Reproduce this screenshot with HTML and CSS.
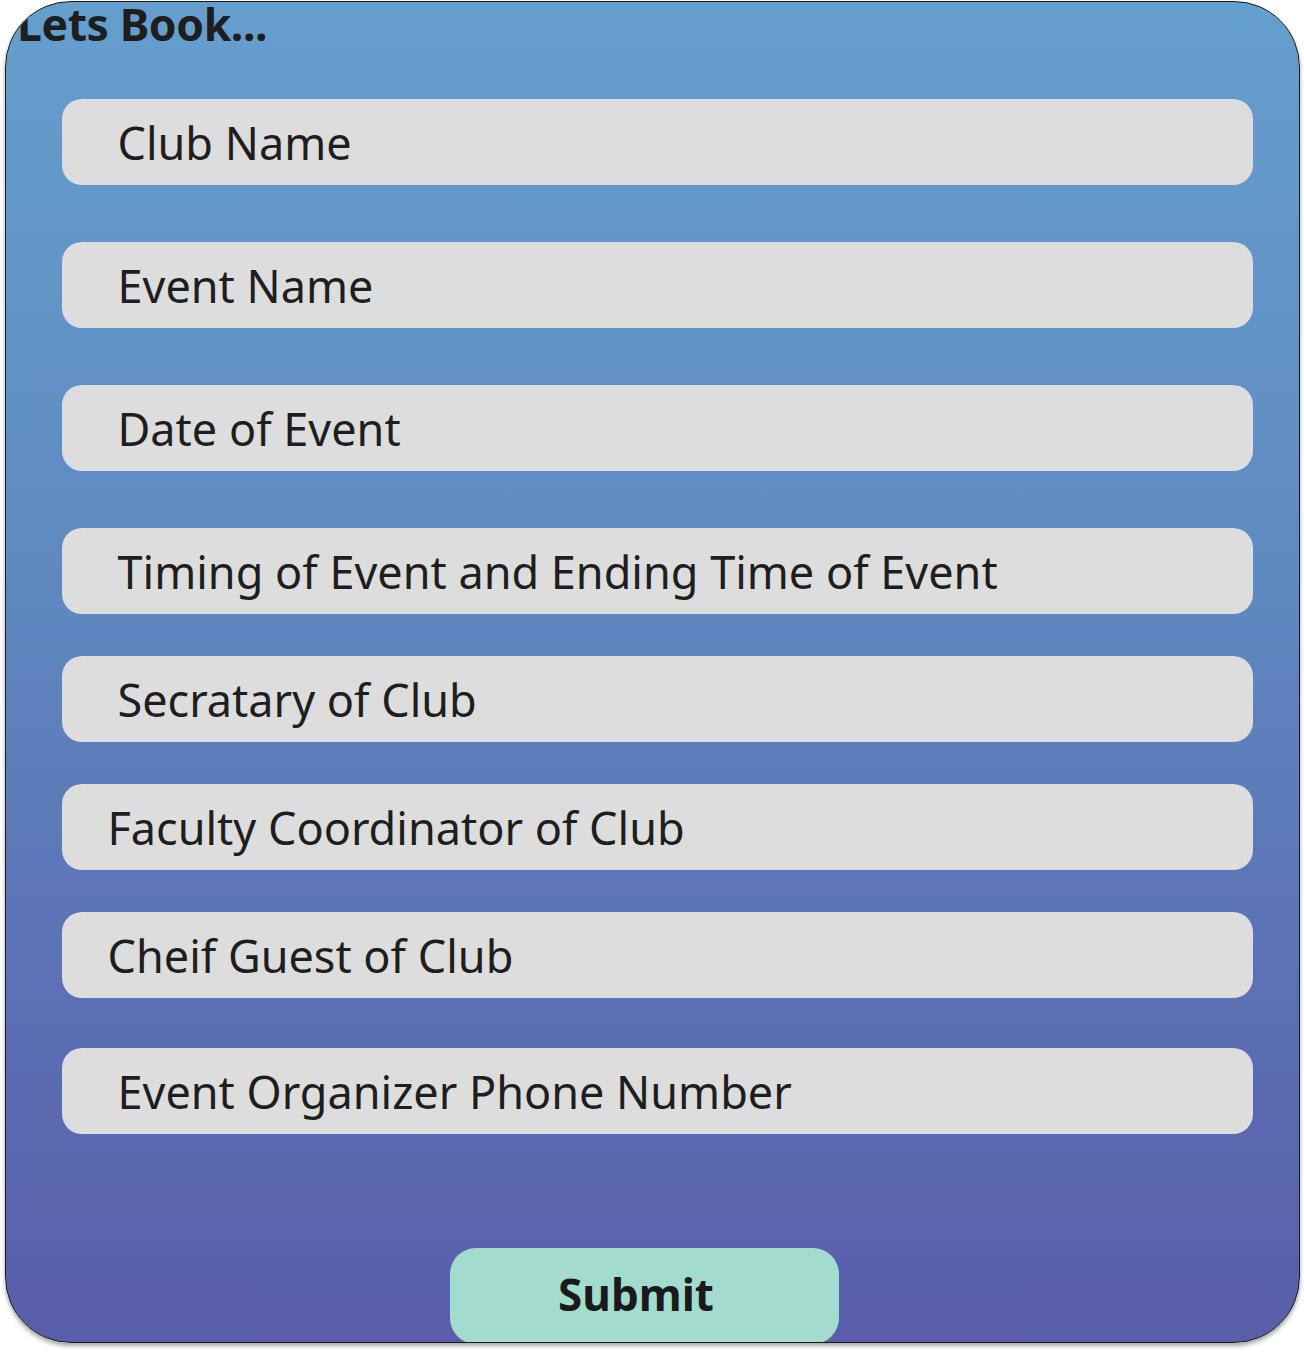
FILE: index.html
```html
<!DOCTYPE html>
<html lang="en">
<head>
<meta charset="utf-8">
<title>Lets Book</title>
<link rel="stylesheet" href="styles.css">
</head>
<body>
<main class="card">
  <h1 class="title">Lets Book...</h1>
  <form class="form">
    <div class="field first">Club Name</div>
    <div class="field wide">Event Name</div>
    <div class="field wide">Date of Event</div>
    <div class="field wide">Timing of Event and Ending Time of Event</div>
    <div class="field">Secratary of Club</div>
    <div class="field shift">Faculty Coordinator of Club</div>
    <div class="field shift">Cheif Guest of Club</div>
    <div class="field mid">Event Organizer Phone Number</div>
    <button type="button" class="submit">Submit</button>
  </form>
</main>
</body>
</html>
```
FILE: styles.css
```css
* { box-sizing: border-box; }
html, body { margin: 0; padding: 0; background: #ffffff; }
body {
  font-family: "Noto Sans", "Open Sans", sans-serif;
  color: #1e1e1e;
  width: 1304px;
  height: 1352px;
}
.card {
  margin: 1px 0 0 5px;
  width: 1295px;
  height: 1342px;
  border: 1.5px solid #1a1a1a;
  border-radius: 66px;
  overflow: hidden;
  background: linear-gradient(180deg, #659fce 0%, #5f8bc2 40%, #5c73b5 70%, #595daa 100%);
  box-shadow: 0 3px 4px rgba(0, 0, 0, 0.35);
  display: flex;
  flex-direction: column;
}
.title {
  margin: -3px 0 0 0;
  padding: 0 0 0 11px;
  height: 52px;
  font-size: 44.5px;
  line-height: 50px;
  font-weight: 700;
  letter-spacing: -0.4px;
  color: #1e1e1e;
}
.form {
  display: flex;
  flex-direction: column;
  align-items: flex-start;
  padding-left: 55.5px;
  margin-top: 50px;
}
.field {
  width: 1191px;
  height: 86px;
  background: #dddddd;
  border-radius: 20px;
  padding-left: 56px;
  display: flex;
  align-items: center;
  font-size: 45px;
  letter-spacing: 0;
  color: #1e1e1e;
  margin-top: 42px;
}
.field.first { margin-top: 0; }
.field.wide { margin-top: 57px; }
.field.shift { padding-left: 46px; }
.field.mid { margin-top: 50px; }
.submit {
  margin: 114px 0 0 388px;
  width: 389px;
  height: 96px;
  border: none;
  border-radius: 26px;
  background: #a2dccf;
  font-family: "Noto Sans", "Open Sans", sans-serif;
  font-size: 44px;
  font-weight: 700;
  color: #1a1a1a;
  padding: 0 16px 4px 0;
}
```
